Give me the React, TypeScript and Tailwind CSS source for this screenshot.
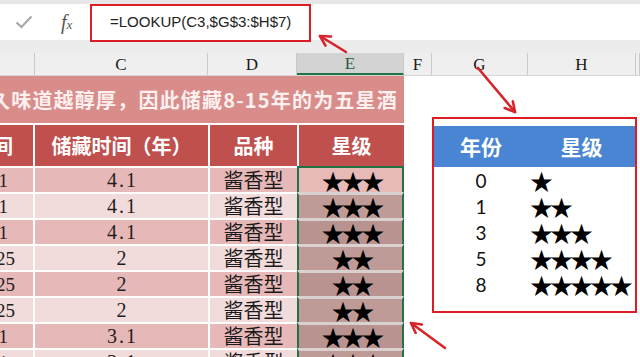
import React from "react";

type Row = {
  b: string;
  bPad: string;
  c: string;
  stars: number;
};

const rows: Row[] = [
  { b: "1", bPad: "pr-[25px]", c: "4.1", stars: 3 },
  { b: "1", bPad: "pr-[25px]", c: "4.1", stars: 3 },
  { b: "1", bPad: "pr-[25px]", c: "4.1", stars: 3 },
  { b: "25", bPad: "pr-[18px]", c: "2", stars: 2 },
  { b: "25", bPad: "pr-[18px]", c: "2", stars: 2 },
  { b: "25", bPad: "pr-[18px]", c: "2", stars: 2 },
  { b: "1", bPad: "pr-[25px]", c: "3.1", stars: 3 },
  { b: "1", bPad: "pr-[25px]", c: "3.1", stars: 3 },
];

const lookup = [
  { year: "0", stars: 1 },
  { year: "1", stars: 2 },
  { year: "3", stars: 3 },
  { year: "5", stars: 4 },
  { year: "8", stars: 5 },
];

const cjk = "font-['Noto_Sans_CJK_SC','Noto_Sans',sans-serif]";
const serif = "font-['Liberation_Serif','Noto_Sans_CJK_SC',serif]";

function Arrow({ x1, y1, x2, y2 }: { x1: number; y1: number; x2: number; y2: number }) {
  // open chevron head at (x2, y2)
  const a = Math.atan2(y1 - y2, x1 - x2);
  const len = 11;
  const s = 0.5;
  const p1 = [x2 + len * Math.cos(a + s), y2 + len * Math.sin(a + s)];
  const p2 = [x2 + len * Math.cos(a - s), y2 + len * Math.sin(a - s)];
  return (
    <g stroke="#d8232a" strokeWidth="2.6" fill="none" strokeLinecap="round" strokeLinejoin="round">
      <line x1={x1} y1={y1} x2={x2} y2={y2} />
      <polyline points={`${p1[0]},${p1[1]} ${x2},${y2} ${p2[0]},${p2[1]}`} />
    </g>
  );
}

function ColHeader() {
  const cols = [
    { w: "w-[35px]", t: "" },
    { w: "w-[173px]", t: "C" },
    { w: "w-[89px]", t: "D" },
    { w: "w-[107px]", t: "E", active: true },
    { w: "w-[28px]", t: "F" },
    { w: "w-[96px]", t: "G" },
    { w: "w-[108px]", t: "H" },
    { w: "w-[4px]", t: "" },
  ];
  return (
    <div className="flex h-[23px] shrink-0 bg-[#efefef] border-b border-[#d6d6d6]">
      {cols.map((c, i) => (
        <div
          key={i}
          className={`${c.w} shrink-0 flex items-center justify-center border-r border-[#cacaca] ${serif} text-[17px] leading-none ${
            c.active ? "bg-[#d3d3d3] border-b-2 border-b-[#217346] text-[#1f5d3b]" : "text-[#1a1a1a]"
          }`}
        >
          {c.t}
        </div>
      ))}
    </div>
  );
}

function DataRow({ row, i }: { row: Row; i: number }) {
  const dark = i % 2 === 0;
  const bg = dark ? "bg-[#e6b8b7]" : "bg-[#f2dcdb]";
  const eCell =
    i === 0
      ? "bg-[#e7bab8] border-t-2 border-t-[#217346]"
      : dark
      ? "bg-[#b9938f] border-t-[3px] border-t-[#d9d1d0]"
      : "bg-[#bf9b97] border-t-[3px] border-t-[#d9d1d0]";
  return (
    <div className="flex h-[26px] shrink-0">
      <div
        className={`w-[35px] shrink-0 border-t-2 border-r-2 border-white ${bg} flex items-center justify-end overflow-hidden ${row.bPad} ${serif} text-[19px] leading-none text-[#222]`}
      >
        {row.b}
      </div>
      <div
        className={`w-[175px] shrink-0 border-t-2 border-r-2 border-white ${bg} flex items-center justify-center pl-[2px] ${serif} text-[20px] leading-none tracking-[2px] text-[#1e1e1e]`}
      >
        {row.c}
      </div>
      <div
        className={`w-[87px] shrink-0 border-t-2 border-white ${bg} flex items-center justify-center ${cjk} text-[20px] leading-none text-[#1a1a1a]`}
      >
        酱香型
      </div>
      <div
        className={`w-[107px] shrink-0 border-x-2 border-x-[#217346] ${eCell} flex items-center justify-center pl-[2px] ${cjk} text-[23px] leading-none tracking-[-3px] text-black`}
      >
        {"★".repeat(row.stars)}
      </div>
    </div>
  );
}

export default function App() {
  return (
    <div className="relative w-[640px] h-[357px] overflow-hidden bg-white flex flex-col">
      {/* formula bar */}
      <div className="h-[4px] shrink-0 bg-[#e6e6e6]" />
      <div className="flex h-[36px] shrink-0 items-center bg-white">
        <div className="w-[90px] shrink-0 flex items-center">
          <svg width="18" height="14" viewBox="0 0 18 14" className="ml-[15px]">
            <polyline points="1.5,7.5 6.5,12 16.5,1.5" fill="none" stroke="#a8a8a8" strokeWidth="2.2" />
          </svg>
          <span className="ml-[28px] font-['Liberation_Serif',serif] italic text-[#555] text-[20px] leading-none">
            f<span className="text-[13px]">x</span>
          </span>
        </div>
        <div className="pl-[20px] font-['Liberation_Sans',Arial,sans-serif] text-[15px] text-[#222]">
          =LOOKUP(C3,$G$3:$H$7)
        </div>
      </div>
      <div className="h-[13px] shrink-0 bg-[#ececec]" />
      <ColHeader />

      <div className="flex flex-1">
        {/* left table */}
        <div className="w-[404px] shrink-0 flex flex-col">
          <div
            className={`h-[47px] shrink-0 bg-[#d98d8b] flex items-center justify-end pr-[6px] overflow-hidden whitespace-nowrap ${cjk} font-bold text-[20px] tracking-[1.2px] text-[#fdf0ef]`}
          >
            久味道越醇厚，因此储藏8-15年的为五星酒
          </div>
          <div className={`flex h-[43px] shrink-0 ${cjk} font-bold text-[20px] text-white`}>
            <div className="w-[35px] shrink-0 border-t-2 border-r-2 border-white bg-[#c0504d] flex items-center justify-end pr-[20px] overflow-hidden whitespace-nowrap">
              时间
            </div>
            <div className="w-[175px] shrink-0 border-t-2 border-r-2 border-white bg-[#c0504d] flex items-center justify-center">
              储藏时间（年）
            </div>
            <div className="w-[87px] shrink-0 border-t-2 border-white bg-[#c0504d] flex items-center justify-center">
              品种
            </div>
            <div className="w-[107px] shrink-0 border-t-2 border-l-2 border-white bg-[#c0504d] flex items-center justify-center">
              星级
            </div>
          </div>
          {rows.map((r, i) => (
            <DataRow key={i} row={r} i={i} />
          ))}
        </div>

        {/* lookup table */}
        <div className="ml-[28px] mt-[41px]">
          <div className="w-[205px] h-[196px] border-2 border-[#dc1d24] pt-[7px] flex flex-col">
            <div className={`grid grid-cols-[94px_1fr] h-[41px] bg-[#4a85d3] ${cjk} font-bold text-[21px] text-white`}>
              <div className="flex items-center justify-center">年份</div>
              <div className="flex items-center justify-center">星级</div>
            </div>
            {lookup.map((l) => (
              <div key={l.year} className="grid grid-cols-[94px_1fr] h-[26px]">
                <div className="flex items-center justify-center font-['Lato',sans-serif] text-[19px] leading-none text-[#111]">
                  {l.year}
                </div>
                <div className={`flex items-center pl-[2px] ${cjk} text-[23px] leading-none tracking-[-3px] text-black`}>
                  {"★".repeat(l.stars)}
                </div>
              </div>
            ))}
          </div>
        </div>
      </div>

      {/* annotations */}
      <div className="absolute left-[90px] top-[4px] w-[221px] h-[38px] border-2 border-[#dc1d24]" />
      <svg className="absolute inset-0 pointer-events-none" width="640" height="357">
        <Arrow x1={346} y1={52} x2={320} y2={36} />
        <Arrow x1={478} y1={68} x2={515} y2={112} />
        <Arrow x1={445} y1={348} x2={411} y2={323} />
      </svg>
    </div>
  );
}
